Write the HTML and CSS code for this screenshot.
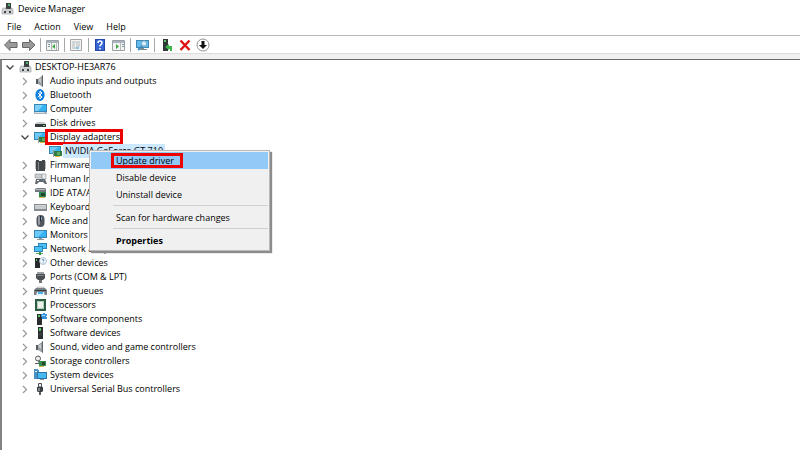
FILE: index.html
```html
<!DOCTYPE html>
<html lang="en">
<head>
    <meta charset="UTF-8">
    <meta name="viewport" content="width=device-width, initial-scale=1.0">
    <title>Device Manager</title>
    <link rel="stylesheet" href="styles.css">
</head>
<body>
    <!-- icon set -->
    <svg class="sprite" aria-hidden="true">
        <symbol id="i-manager" viewBox="0 0 13 12">
            <path d="M5 0h5v6H5z" fill="#3c4143"/><path d="M7 1h2v2H7z" fill="#55b06a"/>
            <path d="M1 7l1-2h3v2h5V5h1l1 2v4H1z" fill="#d5d7d9" stroke="#8d9194" stroke-width=".6"/>
            <path d="M3 8h2v2H3zM8 8h2v2H8z" fill="#3c4143"/>
        </symbol>
        <symbol id="i-speaker" viewBox="0 0 13 12">
            <path d="M2 4h2v5H2z" fill="#555b60"/><path d="M4 4l5-4v12L4 9z" fill="#9a9fa3"/><path d="M8 1l1-1v12l-1-1z" fill="#5e6468"/>
            <path d="M4 5l3-2v5z" fill="#c9cccf"/>
        </symbol>
        <symbol id="i-bluetooth" viewBox="0 0 13 12">
            <ellipse cx="6" cy="6" rx="4.6" ry="6" fill="#0b7de0"/>
            <path d="M3.800 3.800L8 8 6 10V2l2 2-4.200 4.200" fill="none" stroke="#fff"/>
        </symbol>
        <symbol id="i-monitor" viewBox="0 0 13 12">
            <path d="M0 1h13v8H0z" fill="#3685b5"/><path d="M1 2h11v6H1z" fill="#36b3f3"/><path d="M1 2h9L4 8H1z" fill="#6ccaf8"/>
            <path d="M5 9h3v1H5zM3 10h7v1H3z" fill="#8b979e"/>
        </symbol>
        <symbol id="i-computer" viewBox="0 0 13 12">
            <path d="M0 1h13v8H0z" fill="#3685b5"/><path d="M1 2h11v6H1z" fill="#36b3f3"/><path d="M1 2h8L4 8H1z" fill="#7dd0f9"/>
            <path d="M0 9h13v2H0z" fill="#a9b7c1"/><path d="M1 9h9v1H1z" fill="#dce3e8"/>
        </symbol>
        <symbol id="i-disk" viewBox="0 0 13 12">
            <path d="M3 5h7l2 2H1z" fill="#c7cbce"/><path d="M1 7h11v3H1z" fill="#34393c"/><path d="M9 8h2v1H9z" fill="#62c66f"/>
        </symbol>
        <symbol id="i-display" viewBox="0 0 13 12">
            <path d="M0 1h12v8H0z" fill="#3685b5"/><path d="M1 2h10v6H1z" fill="#36b3f3"/><path d="M1 2h8L3 8H1z" fill="#6ccaf8"/>
            <path d="M5 6h8v5H5z" fill="#2f7d45"/><path d="M8 7h3v3H8z" fill="#5cae62"/><path d="M6 11h5v1H6z" fill="#e2b53e"/><path d="M4 5h1v7H4z" fill="#9ba1a4"/>
        </symbol>
        <symbol id="i-firmware" viewBox="0 0 13 12">
            <path d="M2 1h3v1h3V1h3v11H2z" fill="#43474a"/><path d="M1 3h1M1 5h1M1 7h1M1 9h1M11 3h1M11 5h1M11 7h1M11 9h1" stroke="#777"/><path d="M4 3h1v8H4z" fill="#85898c"/>
        </symbol>
        <symbol id="i-hid" viewBox="0 0 13 12">
            <path d="M1 1h7v4H1z" fill="#c9ced2" stroke="#8a9196" stroke-width=".6"/><path d="M8 1h4v5H8z" fill="#e8eaec" stroke="#8a9196" stroke-width=".6"/>
            <path d="M1 11l1-5h9l2 5h-2L9 9H5l-2 2z" fill="#61686e"/><path d="M3 7h2v1H3z" fill="#fff"/><path d="M9 7h1v1H9z" fill="#47a3e6"/>
        </symbol>
        <symbol id="i-ide" viewBox="0 0 13 12">
            <path d="M1 2l2-1h8l1 1v3H1z" fill="#72787c"/><path d="M2 2h9v1H2z" fill="#b9bec1"/>
            <path d="M5 5h7v5H5z" fill="#2a8a50"/><path d="M7 6h4v3H7z" fill="#24432f"/><path d="M5 10h6v1H5z" fill="#d6b24a"/>
        </symbol>
        <symbol id="i-keyboard" viewBox="0 0 13 12">
            <path d="M0 3h13v7H0z" fill="#868d92"/><path d="M1 4h11v4H1z" fill="#d2d6d9"/><path d="M1 5.500h11M1 7h11" stroke="#aeb4b8" stroke-width=".5"/>
        </symbol>
        <symbol id="i-mouse" viewBox="0 0 13 12">
            <rect x="2.500" y="0" width="8" height="12" rx="4" fill="#50565c"/><rect x="4" y="1" width="2" height="9" rx="1" fill="#939ba1"/><path d="M6 1h1v5H6z" fill="#26292c"/><path d="M7 2h1v3H7z" fill="#72a7d8"/>
        </symbol>
        <symbol id="i-network" viewBox="0 0 13 12">
            <path d="M4 0h9v6H4z" fill="#2b83bb"/><path d="M5 1h7v4H5z" fill="#4bc0f6"/><path d="M0 3h9v6H0z" fill="#2b83bb"/><path d="M1 4h7v4H1z" fill="#4bc0f6"/>
            <path d="M2 10h7v1H2z" fill="#52a95c"/><path d="M5 9h2v3H5z" fill="#3d8f49"/>
        </symbol>
        <symbol id="i-other" viewBox="0 0 13 12">
            <path d="M1 1h5v10H1z" fill="#26292b"/><path d="M2 2h1v2H2z" fill="#58c569"/>
            <circle cx="9" cy="4" r="3.500" fill="#f3f7fa" stroke="#92aabd" stroke-width=".7"/><path d="M8 3q1-1.500 2 0 0 1-1 1.500M9 5.500v1" fill="none" stroke="#2873b5" stroke-width=".8"/>
        </symbol>
        <symbol id="i-port" viewBox="0 0 13 12">
            <path d="M3 1h7v2H3z" fill="#9a9fa2"/><path d="M2 3h9v4L9 9H4L2 7z" fill="#4a4e51"/><path d="M3 4h7v1H3z" fill="#808588"/><path d="M5 9h3v3H5z" fill="#707477"/>
        </symbol>
        <symbol id="i-printer" viewBox="0 0 13 12">
            <path d="M3 2h7v3H3z" fill="#e4e7e9" stroke="#8d9397" stroke-width=".5"/><path d="M0 5l2-2h9l2 2v5H0z" fill="#777f85"/><path d="M1 5h11v1H1z" fill="#343a3e"/>
            <path d="M3 7h7l1 4H2z" fill="#e9f5fd"/><path d="M4 7h5v2H4z" fill="#45b1ef"/>
        </symbol>
        <symbol id="i-cpu" viewBox="0 0 13 12">
            <path d="M1 0h11v12H1z" fill="#2c5b43"/><path d="M3 2h7v8H3z" fill="#b3cdb9"/><path d="M4 3h5v6H4z" fill="#eef0ee"/>
        </symbol>
        <symbol id="i-softcomp" viewBox="0 0 13 12">
            <path d="M3 1h5v11H3z" fill="#2a2e30"/><path d="M4 2h2v2H4z" fill="#58c569"/><path d="M7 1h2V0h2v1h2v2h-1v1h1v2H8V4H7z" fill="#3395df"/><path d="M8 2h3v1H8z" fill="#a6d7f8"/>
        </symbol>
        <symbol id="i-softdev" viewBox="0 0 13 12">
            <path d="M4 0h5v12H4z" fill="#2a2e30"/><path d="M5 1h2v3H5z" fill="#58c569"/><path d="M5 6h3M5 8h3" stroke="#54595c" stroke-width=".6"/>
        </symbol>
        <symbol id="i-storage" viewBox="0 0 13 12">
            <circle cx="4" cy="3.500" r="2.500" fill="#eee" stroke="#52585b" stroke-width="1"/><path d="M1 8h4v1H1zM4 6l3 1-2 2z" fill="#52585b"/>
            <path d="M5 6h7v5H5z" fill="#318c4e"/><path d="M8 7h3v3H8z" fill="#29472f"/><path d="M5 11h5v1H5z" fill="#d7b44f"/>
        </symbol>
        <symbol id="i-system" viewBox="0 0 13 12">
            <path d="M0 0h4v1h1v9H0z" fill="#4a92c4"/><path d="M1 2h2v1H1z" fill="#d8f1ff"/><path d="M3 3h10v7H3z" fill="#2877a8"/><path d="M4 4h8v5H4z" fill="#45b8f2"/><path d="M6 10h4v1H6z" fill="#81909a"/>
        </symbol>
        <symbol id="i-usb" viewBox="0 0 13 12">
            <path d="M4.500.5h3V4h-3z" fill="#eee" stroke="#4b4f52"/><path d="M3 4h6v4L8 9H4L3 8z" fill="#3c4043"/><path d="M4 5h2v3H4z" fill="#85898b"/><path d="M5 9h2v3H5z" fill="#5c6063"/>
        </symbol>
        <symbol id="i-back" viewBox="0 0 14 14">
            <path d="M.5 7L6 1.500v3h7v5H6v3z" fill="#9a9a9a" stroke="#686868"/>
        </symbol>
        <symbol id="i-forward" viewBox="0 0 14 14">
            <path d="M13 7L7.500 1.500v3h-7v5h7v3z" fill="#9a9a9a" stroke="#686868"/>
        </symbol>
        <symbol id="i-tree-pane" viewBox="0 0 14 14">
            <path d="M.5 2.500h12v10H.5z" fill="#f4f4f2" stroke="#9aa0a5"/><path d="M1 3h11v2H1z" fill="#a9b4be"/><path d="M5 5h1v7H5zM10 5h1v7h-1z" fill="#b4b9bd"/><path d="M2 6h2v1H2zM2 8h2v1H2z" fill="#8296a8"/><path d="M9 6v5L6 8.500z" fill="#3eaa45"/>
        </symbol>
        <symbol id="i-props" viewBox="0 0 14 14">
            <path d="M.5 1.500h11v11H.5z" fill="#f3f3f1" stroke="#a2a6a9"/><path d="M2 4h8M2 6h3M6 6h4M2 8h3M6 8h4M2 10h5" stroke="#b0b6ba"/><path d="M6 9h3v2H6z" fill="#8ac4e5"/>
        </symbol>
        <symbol id="i-help" viewBox="0 0 14 14">
            <path d="M1 1h10v12H1z" fill="#2346a8"/><path d="M2 2h8v10H2z" fill="#3566d4"/><path d="M4 5q0-2 2-2t2 2q0 1-2 2.500v1M6 10v1.500" fill="none" stroke="#fff" stroke-width="1.500"/>
        </symbol>
        <symbol id="i-action-pane" viewBox="0 0 14 14">
            <path d="M.5 2.500h12v10H.5z" fill="#f4f4f2" stroke="#9aa0a5"/><path d="M1 3h11v2H1z" fill="#a9b4be"/><path d="M8 5h1v7H8z" fill="#b4b9bd"/><path d="M10 6h2v1h-2zM10 8h2v1h-2z" fill="#8296a8"/><path d="M4 6v5l3-2.500z" fill="#3eaa45"/>
        </symbol>
        <symbol id="i-scan" viewBox="0 0 14 14">
            <path d="M0 2h13v8H0z" fill="#4387b3"/><path d="M1 3h11v6H1z" fill="#62bdee"/><path d="M5 10h3v1H5zM4 11h7v1H4z" fill="#7b8990"/><circle cx="8" cy="5.500" r="2.700" fill="#d5f0fc" stroke="#6ba2c5"/><path d="M6 8l-4 4" stroke="#4287b5" stroke-width="1.800"/>
        </symbol>
        <symbol id="i-update" viewBox="0 0 14 14">
            <path d="M3 1h5v12H3z" fill="#303638"/><path d="M4 2h2v2H4z" fill="#58c569"/><path d="M5 9l4-3v2h3v5h-2v-2H9v1z" fill="#39b54a"/>
        </symbol>
        <symbol id="i-remove" viewBox="0 0 14 14">
            <path d="M2.500 2.500l9 9.500M11.500 2.500l-9 9.500" stroke="#dc1215" stroke-width="2.400"/>
        </symbol>
        <symbol id="i-disable" viewBox="0 0 14 14">
            <circle cx="7" cy="7" r="6" fill="#fff" stroke="#777" stroke-width=".8"/><path d="M5.500 3h3v4H11l-4 4-4-4h2.500z" fill="#111"/>
        </symbol>
        <symbol id="i-open" viewBox="0 0 10 10">
            <path d="M1.500 3.500L5 7l3.500-3.500" fill="none" stroke="#444" stroke-width="1.300"/>
        </symbol>
        <symbol id="i-closed" viewBox="0 0 10 10">
            <path d="M3 2l3.500 3.500L3 9" fill="none" stroke="#999" stroke-width="1.200"/>
        </symbol>
    </svg>

    <header class="titlebar">
        <svg class="icon"><use href="#i-manager"/></svg>
        <span>Device Manager</span>
    </header>

    <nav class="menubar">
        <button>File</button>
        <button>Action</button>
        <button>View</button>
        <button>Help</button>
    </nav>

    <div class="toolbar">
        <div class="group">
            <button aria-label="Back"><svg><use href="#i-back"/></svg></button>
            <button aria-label="Forward"><svg><use href="#i-forward"/></svg></button>
        </div>
        <div class="group">
            <button aria-label="Show console tree"><svg><use href="#i-tree-pane"/></svg></button>
        </div>
        <div class="group">
            <button aria-label="Properties"><svg><use href="#i-props"/></svg></button>
        </div>
        <div class="group">
            <button aria-label="Help"><svg><use href="#i-help"/></svg></button>
            <button aria-label="Show action pane"><svg><use href="#i-action-pane"/></svg></button>
        </div>
        <div class="group">
            <button aria-label="Scan for hardware changes"><svg><use href="#i-scan"/></svg></button>
        </div>
        <div class="group">
            <button aria-label="Update driver"><svg><use href="#i-update"/></svg></button>
            <button aria-label="Uninstall device"><svg><use href="#i-remove"/></svg></button>
            <button aria-label="Disable device"><svg><use href="#i-disable"/></svg></button>
        </div>
    </div>

    <main class="pane">
        <ul class="tree">
            <li>
                <div class="row"><button class="toggle" aria-label="Collapse"><svg><use href="#i-open"/></svg></button><svg class="icon"><use href="#i-manager"/></svg><span>DESKTOP-HE3AR76</span></div>
                <ul>
                    <li class="row"><button class="toggle" aria-label="Expand"><svg><use href="#i-closed"/></svg></button><svg class="icon"><use href="#i-speaker"/></svg><span>Audio inputs and outputs</span></li>
                    <li class="row"><button class="toggle" aria-label="Expand"><svg><use href="#i-closed"/></svg></button><svg class="icon"><use href="#i-bluetooth"/></svg><span>Bluetooth</span></li>
                    <li class="row"><button class="toggle" aria-label="Expand"><svg><use href="#i-closed"/></svg></button><svg class="icon"><use href="#i-computer"/></svg><span>Computer</span></li>
                    <li class="row"><button class="toggle" aria-label="Expand"><svg><use href="#i-closed"/></svg></button><svg class="icon"><use href="#i-disk"/></svg><span>Disk drives</span></li>
                    <li>
                        <div class="row"><button class="toggle" aria-label="Collapse"><svg><use href="#i-open"/></svg></button><svg class="icon"><use href="#i-display"/></svg><span class="marked">Display adapters</span></div>
                        <ul>
                            <li class="row">
                                <span class="toggle"></span><svg class="icon"><use href="#i-display"/></svg><span class="selected">NVIDIA GeForce GT 710</span>
                                <div class="context-menu">
                                    <button class="active"><span class="marked">Update driver</span></button>
                                    <button>Disable device</button>
                                    <button>Uninstall device</button>
                                    <hr>
                                    <button>Scan for hardware changes</button>
                                    <hr>
                                    <button class="default">Properties</button>
                                </div>
                            </li>
                        </ul>
                    </li>
                    <li class="row"><button class="toggle" aria-label="Expand"><svg><use href="#i-closed"/></svg></button><svg class="icon"><use href="#i-firmware"/></svg><span>Firmware</span></li>
                    <li class="row"><button class="toggle" aria-label="Expand"><svg><use href="#i-closed"/></svg></button><svg class="icon"><use href="#i-hid"/></svg><span>Human Interface Devices</span></li>
                    <li class="row"><button class="toggle" aria-label="Expand"><svg><use href="#i-closed"/></svg></button><svg class="icon"><use href="#i-ide"/></svg><span>IDE ATA/ATAPI controllers</span></li>
                    <li class="row"><button class="toggle" aria-label="Expand"><svg><use href="#i-closed"/></svg></button><svg class="icon"><use href="#i-keyboard"/></svg><span>Keyboards</span></li>
                    <li class="row"><button class="toggle" aria-label="Expand"><svg><use href="#i-closed"/></svg></button><svg class="icon"><use href="#i-mouse"/></svg><span>Mice and other pointing devices</span></li>
                    <li class="row"><button class="toggle" aria-label="Expand"><svg><use href="#i-closed"/></svg></button><svg class="icon"><use href="#i-monitor"/></svg><span>Monitors</span></li>
                    <li class="row"><button class="toggle" aria-label="Expand"><svg><use href="#i-closed"/></svg></button><svg class="icon"><use href="#i-network"/></svg><span>Network adapters</span></li>
                    <li class="row"><button class="toggle" aria-label="Expand"><svg><use href="#i-closed"/></svg></button><svg class="icon"><use href="#i-other"/></svg><span>Other devices</span></li>
                    <li class="row"><button class="toggle" aria-label="Expand"><svg><use href="#i-closed"/></svg></button><svg class="icon"><use href="#i-port"/></svg><span>Ports (COM &amp; LPT)</span></li>
                    <li class="row"><button class="toggle" aria-label="Expand"><svg><use href="#i-closed"/></svg></button><svg class="icon"><use href="#i-printer"/></svg><span>Print queues</span></li>
                    <li class="row"><button class="toggle" aria-label="Expand"><svg><use href="#i-closed"/></svg></button><svg class="icon"><use href="#i-cpu"/></svg><span>Processors</span></li>
                    <li class="row"><button class="toggle" aria-label="Expand"><svg><use href="#i-closed"/></svg></button><svg class="icon"><use href="#i-softcomp"/></svg><span>Software components</span></li>
                    <li class="row"><button class="toggle" aria-label="Expand"><svg><use href="#i-closed"/></svg></button><svg class="icon"><use href="#i-softdev"/></svg><span>Software devices</span></li>
                    <li class="row"><button class="toggle" aria-label="Expand"><svg><use href="#i-closed"/></svg></button><svg class="icon"><use href="#i-speaker"/></svg><span>Sound, video and game controllers</span></li>
                    <li class="row"><button class="toggle" aria-label="Expand"><svg><use href="#i-closed"/></svg></button><svg class="icon"><use href="#i-storage"/></svg><span>Storage controllers</span></li>
                    <li class="row"><button class="toggle" aria-label="Expand"><svg><use href="#i-closed"/></svg></button><svg class="icon"><use href="#i-system"/></svg><span>System devices</span></li>
                    <li class="row"><button class="toggle" aria-label="Expand"><svg><use href="#i-closed"/></svg></button><svg class="icon"><use href="#i-usb"/></svg><span>Universal Serial Bus controllers</span></li>
                </ul>
            </li>
        </ul>
    </main>
</body>
</html>
```
FILE: styles.css
```css
* {
    box-sizing: border-box;
}
body {
    margin: 0;
    min-height: 100vh;
    display: flex;
    flex-direction: column;
    background-color: #fff;
    color: #000;
    font-family: "Open Sans", "Noto Sans", sans-serif;
    font-size: 9px;
    line-height: 14px;
    white-space: nowrap;
}
button {
    margin: 0;
    padding: 0;
    border: none;
    background: none;
    color: inherit;
    font: inherit;
}
ul {
    list-style: none;
    margin: 0;
    padding: 0;
}
svg {
    display: block;
}
.sprite {
    position: absolute;
    width: 0;
    height: 0;
}
.icon {
    width: 13px;
    height: 12px;
    flex: none;
}
.titlebar {
    display: flex;
    align-items: center;
    gap: 4px;
    height: 18px;
    padding-left: 1px;
}
.menubar {
    display: flex;
    gap: 13px;
    height: 18px;
    padding-left: 7px;
    border-bottom: 1px solid #b9babe;
}
.toolbar {
    display: flex;
    align-items: center;
    height: 18px;
    padding-left: 4px;
    border-bottom: 1px solid #dcdcdc;
}
.group {
    display: flex;
    gap: 4px;
}
.group + .group {
    margin-left: 4px;
    padding-left: 5px;
    border-left: 1px solid #a8a8a8;
}
.toolbar svg {
    width: 14px;
    height: 14px;
}
.pane {
    flex: 1;
    border-top: 1px solid #696969;
    border-left: 2px solid #828282;
    margin-top: 5px;
    box-shadow: 0 -5px #f0f0f0;
}
.tree {
    padding: 0 0 0 3px;
}
.tree ul {
    padding-left: 15px;
}
.row {
    position: relative;
    display: flex;
    align-items: center;
    height: 14px;
}
.toggle {
    width: 10px;
    height: 10px;
    margin-right: 4px;
}
.toggle svg {
    width: 10px;
    height: 10px;
}
.row .icon {
    margin-right: 3px;
}
.selected {
    background-color: #cce8ff;
    margin-left: -2px;
    padding: 0 2px;
}
.marked {
    line-height: 10px;
    padding-left: 2px;
    margin-left: -2px;
    outline: 3px solid #ec0000;
}
.context-menu {
    position: absolute;
    left: 54px;
    top: 6px;
    z-index: 1;
    width: 181px;
    padding: 1px;
    background-color: #f0f0f0;
    border: 1px solid #b8b8b8;
    box-shadow: 2px 2px 1px #8c8c8c;
}
.context-menu button {
    display: flex;
    align-items: center;
    width: 100%;
    height: 17px;
    padding-left: 25px;
}
.context-menu .active {
    background-color: #91c9f7;
}
.context-menu .marked {
    line-height: 9px;
    padding-right: 6px;
}
.context-menu .default {
    font-weight: bold;
}
.context-menu hr {
    margin: 2px 0 3px 22px;
    border: none;
    border-top: 1px solid #d0d0d0;
}
```
